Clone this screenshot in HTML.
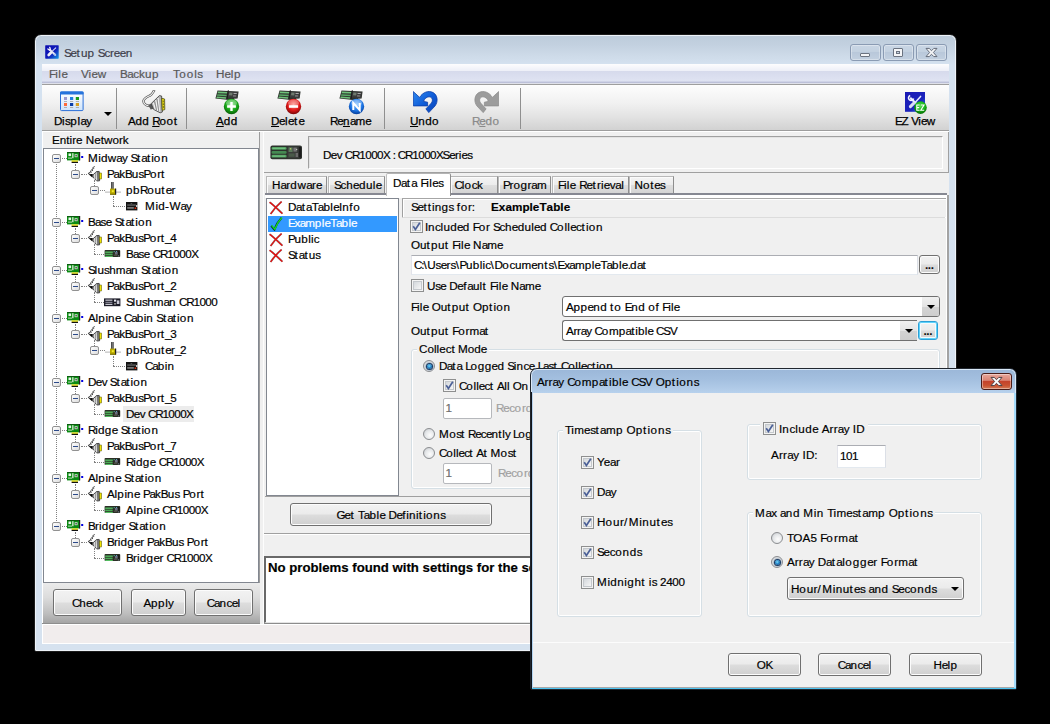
<!DOCTYPE html>
<html>
<head>
<meta charset="utf-8">
<title>Setup Screen</title>
<style>
*{box-sizing:border-box;margin:0;padding:0}
html,body{width:1050px;height:724px;overflow:hidden;background:#000}
body{position:relative;font-family:"Liberation Sans",sans-serif;font-size:12px;color:#000}
.a{position:absolute}
.t{position:absolute;white-space:nowrap;line-height:14px;font-size:11.7px;font-kerning:none;-webkit-text-stroke:.18px currentColor}
.u{text-decoration:underline}
#win{left:34px;top:34px;width:923px;height:618px;border-radius:7px 7px 2px 2px;background:linear-gradient(#bccbda 0px,#c3d1e0 10px,#cddae8 20px,#d5e2f0 30px,#d6e2ef 100%);border:1px solid #1c1c1c;box-shadow:inset 0 0 0 1px #eef3f9}
#client{left:42px;top:64px;width:907px;height:580px;background:#f0f0f0}
.capb{position:absolute;top:44px;width:31px;height:17px;border:1px solid #8a9bb3;border-radius:3px;background:linear-gradient(#c9d6e5,#c3d1e0 45%,#b9c8da 50%,#c2d0e0);box-shadow:inset 0 0 0 1px rgba(255,255,255,.35)}
#menubar{left:42px;top:64px;width:907px;height:19px;background:linear-gradient(#fdfdfe 0,#eef0f8 6.5px,#d6daec 7px,#dfe3f2 17px,#c0c4dc 18px,#b9bdd6 19px)}
#menubar .t{top:3px;color:#585858}
#tbar{left:42px;top:85px;width:907px;height:45px;background:linear-gradient(#fdfdfd 0,#f1f1f1 40%,#e3e3e3 70%,#d2d2d2 100%)}
.sep{position:absolute;top:88px;width:1px;height:41px;background:#8f8f8f}
.tbt{position:absolute;top:114px;white-space:nowrap;font-size:11.7px;line-height:14px;-webkit-text-stroke:.25px #000;font-kerning:none}
/* widgets */
.btn{position:absolute;border:1px solid #707070;border-radius:3px;background:linear-gradient(#f2f2f2 0,#ebebeb 48%,#dddddd 52%,#cfcfcf 100%);box-shadow:inset 0 0 0 1px #fcfcfc;text-align:center;font-size:11.7px;white-space:nowrap;font-kerning:none;-webkit-text-stroke:.18px currentColor}
.chk{position:absolute;width:13px;height:13px;border:1px solid #8e8f8f;background:#f4f4f4;box-shadow:inset 0 0 0 1px #f4f4f4,inset 0 0 0 2px #c4c8cc;}
.chk i{position:absolute;left:2px;top:2px;width:7px;height:7px;background:linear-gradient(135deg,#d4d8dc,#f6f6f6)}
.rad{position:absolute;width:12px;height:12px;border:1px solid #8b8d90;border-radius:50%;background:radial-gradient(circle at 60% 62%,#fdfdfd 0,#e6e8ea 50%,#bfc3c8 100%)}
.rad.on:after{content:"";position:absolute;left:2.5px;top:2.5px;width:5px;height:5px;border-radius:50%;background:radial-gradient(circle at 45% 40%,#7fdcfa 0,#1d7fc4 50%,#0c2c5c 100%);box-shadow:0 0 0 1px #1b3c63,0 0 0 1.8px rgba(120,140,165,.55)}
.grp{position:absolute;border:1px solid #d5dfe5;border-radius:3px;box-shadow:inset 0 0 0 1px #fff}
.leg{position:absolute;background:#f0f0f0;white-space:nowrap;font-size:11.7px;line-height:14px;padding:0 2px;font-kerning:none;-webkit-text-stroke:.18px currentColor}
.edit{position:absolute;background:#fff;border:1px solid #e3e9ef;border-top-color:#abadb3;border-left-color:#e2e3ea;border-right-color:#dbdfe6;font-size:11.7px;white-space:nowrap;overflow:hidden}
.combo{position:absolute;background:#fff;border:1px solid #707070;border-radius:3px;font-size:11.7px;white-space:nowrap;overflow:hidden}
.cbb{position:absolute;right:0;top:0;bottom:0;width:17px;background:linear-gradient(#f0f0f0,#e4e4e4 50%,#d4d4d4 51%,#cdcdcd)}
.cbb:after{content:"";position:absolute;left:5px;top:50%;margin-top:-2px;border-left:4px solid transparent;border-right:4px solid transparent;border-top:4px solid #000}
.dl{position:absolute;border-style:dotted;border-color:#808080;border-width:0}
.exp{position:absolute;width:9px;height:9px;border:1px solid #919191;border-radius:2px;background:linear-gradient(135deg,#fff,#dcdcdc)}
.exp:after{content:"";position:absolute;left:1px;top:3px;width:5px;height:1px;background:#2c4a8a}
.k1{letter-spacing:.1px}.k10{letter-spacing:1.0px}.k11{letter-spacing:1.1px}.k12{letter-spacing:1.2px}.k13{letter-spacing:1.3px}.k14{letter-spacing:1.4px}.k15{letter-spacing:1.5px}.k2{letter-spacing:.2px}.k3{letter-spacing:.3px}.k4{letter-spacing:.4px}.k5{letter-spacing:.5px}.k6{letter-spacing:.6px}.k7{letter-spacing:.7px}.k8{letter-spacing:.8px}.k9{letter-spacing:.9px}.kn1{letter-spacing:-.1px}.kn10{letter-spacing:-1.0px}.kn11{letter-spacing:-1.1px}.kn12{letter-spacing:-1.2px}.kn2{letter-spacing:-.2px}.kn3{letter-spacing:-.3px}.kn4{letter-spacing:-.4px}.kn5{letter-spacing:-.5px}.kn6{letter-spacing:-.6px}.kn7{letter-spacing:-.7px}.kn8{letter-spacing:-.8px}.kn9{letter-spacing:-.9px}</style>
</head>
<body>
<div id="win" class="a"></div>
<div id="client" class="a"></div>
<svg class="a" style="left:45px;top:45px" width="14" height="14" viewBox="0 0 14 14">
 <defs><linearGradient id="ig" x1="0" y1="0" x2="1" y2="1"><stop offset="0" stop-color="#0c0cae"/><stop offset=".55" stop-color="#0f1cba"/><stop offset="1" stop-color="#149ae6"/></linearGradient></defs>
 <rect x=".2" y=".2" width="13.5" height="13.5" rx=".6" fill="url(#ig)"/>
 <path d="M4.8 4.8 L10.2 9.8" stroke="#e4e6f6" stroke-width="1.9" stroke-linecap="round"/>
 <path d="M2.9 3.9 L4.6 5.2 M4.7 2.3 L5.4 4.4" stroke="#f2f3fb" stroke-width="1.3" stroke-linecap="round"/>
 <path d="M10.7 2.8 L7.6 5.9" stroke="#cdd2f2" stroke-width="1.1" stroke-linecap="round"/>
 <path d="M5.9 7.8 L3.7 10" stroke="#eeeef6" stroke-width="2.7" stroke-linecap="round"/>
 <path d="M9.4 9.4 L10.4 10.2" stroke="#a8c4ee" stroke-width="1.6" stroke-linecap="round"/>
</svg>
<div class="t" style="left:64px;top:46px;color:#3d3d4a"><span class="kn12">S</span><span class="kn6">e</span><span class="k11">t</span><span class="k2">u</span><span class="k6">p</span><span class="kn1"> </span><span class="kn12">S</span><span class="kn4">c</span>r<span class="kn6">ee</span><span class="k5">n</span></div>
<div class="capb" style="left:850px"><div class="a" style="left:9px;top:8px;width:10px;height:4px;border:1px solid #6b7380;border-radius:1px;background:#f4f5f7"></div></div>
<div class="capb" style="left:883px"><div class="a" style="left:9px;top:3px;width:10px;height:9px;border:1px solid #6b7380;border-radius:1px;background:#f4f5f7"><div class="a" style="left:2px;top:2px;width:4px;height:3px;border:1px solid #6b7380;background:#c6d3e2"></div></div></div>
<div class="capb" style="left:916px"><svg class="a" style="left:8px;top:2px" width="13" height="11" viewBox="0 0 13 11"><path d="M1 1.4 L4.2 1.4 L6.5 3.7 L8.8 1.4 L12 1.4 L8.4 5.5 L12 9.6 L8.8 9.6 L6.5 7.3 L4.2 9.6 L1 9.6 L4.6 5.5 Z" fill="#f4f5f7" stroke="#646c7a" stroke-width="1" stroke-linejoin="round"/></svg></div>
<div id="menubar" class="a">
 <div class="t" style="left:7px"><span class="kn10">F</span><span class="k5">i</span><span class="k6">l</span><span class="kn3">e</span></div>
 <div class="t" style="left:39px"><span class="kn3">V</span><span class="k5">i</span><span class="kn3">e</span><span class="k4">w</span></div>
 <div class="t" style="left:78px"><span class="kn5">B</span><span class="kn6">a</span><span class="kn1">c</span><span class="k1">k</span><span class="k5">u</span><span class="k9">p</span></div>
 <div class="t" style="left:131px"><span class="kn10">T</span><span class="k10">oo</span><span class="k5">l</span><span class="kn5">s</span></div>
 <div class="t" style="left:174px"><span class="k1">H</span><span class="kn3">e</span><span class="k6">l</span><span class="k9">p</span></div>
</div>
<div class="a" style="left:42px;top:83px;width:907px;height:1px;background:#dfe1ea"></div>
<div class="a" style="left:42px;top:84px;width:907px;height:1px;background:#9e9e9e"></div>
<div id="tbar" class="a"></div>
<div class="a" style="left:42px;top:130px;width:907px;height:1px;background:#9d9d9d"></div>
<div class="sep" style="left:116px"></div>
<div class="sep" style="left:186px"></div>
<div class="sep" style="left:384px"></div>
<div class="sep" style="left:520px"></div>
<div class="tbt" style="left:54px"><span class="kn4">D</span><span class="k3">i</span><span class="kn6">s</span><span class="k7">p</span><span class="k4">l</span><span class="kn7">a</span><span class="kn2">y</span></div>
<div class="a" style="left:104px;top:112px;width:0;height:0;border-left:4px solid transparent;border-right:4px solid transparent;border-top:4px solid #000"></div>
<div class="tbt" style="left:128px"><span class="kn3">A</span><span class="k3">dd</span><span class="kn2"> </span><span class="u"><span class="kn12">R</span></span><span class="k7">oo</span><span class="k10">t</span></div>
<div class="tbt" style="left:216px"><span class="u"><span class="kn1">A</span></span><span class="k5">dd</span></div>
<div class="tbt" style="left:271px"><span class="u"><span class="kn4">D</span></span><span class="kn5">e</span><span class="k4">l</span><span class="kn5">e</span><span class="k12">t</span><span class="kn5">e</span></div>
<div class="tbt" style="left:330px"><span class="kn12">R</span><span class="kn8">e</span><span class="u"><span class="k5">n</span></span><span class="kn9">a</span>m<span class="kn6">e</span></div>
<div class="tbt" style="left:410px"><span class="u"><span class="kn3">U</span></span><span class="k5">n</span><span class="k3">d</span><span class="k8">o</span></div>
<div class="tbt" style="left:472px;color:#8a8a8a;-webkit-text-stroke:.25px #8a8a8a"><span class="kn11">R</span><span class="u"><span class="kn4">e</span></span><span class="k5">d</span><span class="k10">o</span></div>
<div class="tbt" style="left:895px"><span class="kn12">E</span><span class="kn6">Z</span><span class="kn2"> </span><span class="kn7">V</span><span class="k1">i</span><span class="kn7">e</span>w</div>

<div class="a" style="left:42px;top:131px;width:907px;height:1px;background:#fff"></div>
<div class="t" style="left:52px;top:133px">Entire Network</div>
<div class="a" style="left:43px;top:148px;width:216px;height:435px;background:#fff;border:1px solid #828790"></div>
<div class="dl" style="left:56px;top:164px;width:0;height:357px;border-left-width:1px"></div>
<div class="exp" style="left:52px;top:154px"></div>
<div class="dl" style="left:62px;top:158px;width:5px;height:0;border-top-width:1px"></div>
<svg class="a" style="left:67px;top:152px" width="17" height="12" viewBox="0 0 17 12"><rect x="0" y="0" width="13" height="8.4" fill="#0a8a12"/><rect x="0" y="0" width="13" height="1" fill="#0c5a10"/><rect x="12" y="0" width="1.2" height="8.4" fill="#222"/><rect x="1.5" y="1.5" width="2.6" height="2.6" fill="#e8f4e8"/><rect x="5.2" y="1.2" width="1.3" height="5" fill="#dfeedd"/><rect x="7.6" y="2.2" width="3" height="3" fill="#cfe2cf"/><rect x="8.4" y="3" width="1.4" height="1.4" fill="#444"/><rect x="1" y="5.6" width="4" height="1" fill="#bfe0bf"/><rect x="4.6" y="8.4" width="6.4" height="1.4" fill="#e8e000"/><rect x="4.6" y="9.8" width="6.4" height="1.2" fill="#111"/><rect x="14.2" y="4" width="2" height="2" fill="#0000e0"/></svg>
<div class="t" style="left:88px;top:151px"><span class="k6">M</span><span class="k1">i</span><span class="k3">d</span>w<span class="kn9">a</span><span class="kn4">y</span><span class="kn2"> </span><span class="kn12">S</span><span class="k10">t</span><span class="kn9">a</span><span class="k10">t</span><span class="k1">i</span><span class="k8">o</span><span class="k5">n</span></div>
<div class="exp" style="left:71px;top:170px"></div>
<div class="dl" style="left:75px;top:164px;width:0;height:6px;border-left-width:1px"></div>
<div class="dl" style="left:81px;top:174px;width:6px;height:0;border-top-width:1px"></div>
<svg class="a" style="left:86px;top:166px" width="17" height="16" viewBox="0 0 17 16"><path d="M8.6 0.6 L6.8 1.6 L7.8 2.6 L5.6 3.4 L6.6 4.6 L4.2 5.2 L5.2 6.4 L2.2 7.2 L3.4 8.6" stroke="#111" stroke-width="1" fill="none" stroke-dasharray="1.5 .6"/><path d="M2.6 8.2 L6.8 8 L6.4 11.6 Z" fill="#000"/><path d="M5.8 10 L10.4 5.6 L13.2 5.4 L13.6 14.8 L10.8 15 Z" fill="#8e8e8e" stroke="#2a2a2a" stroke-width=".8"/><path d="M8.4 8 L8.8 13 M10.2 6.4 L10.6 14.4" stroke="#e0e0e0" stroke-width="1"/><path d="M11.8 6 L12.2 14.6" stroke="#5a5a5a" stroke-width=".8"/><rect x="13.4" y="7" width="2.2" height="6" fill="#f0e400" stroke="#4a4a10" stroke-width=".5"/></svg>
<div class="t" style="left:107px;top:167px"><span class="kn12">P</span><span class="kn9">a</span><span class="kn2">k</span><span class="kn9">B</span><span class="k1">u</span><span class="kn8">s</span><span class="kn12">P</span><span class="k7">o</span><span class="kn1">r</span><span class="k10">t</span></div>
<div class="exp" style="left:90px;top:186px"></div>
<div class="dl" style="left:94px;top:180px;width:0;height:6px;border-left-width:1px"></div>
<div class="dl" style="left:100px;top:190px;width:5px;height:0;border-top-width:1px"></div>
<svg class="a" style="left:105px;top:182px" width="17" height="13" viewBox="0 0 17 13"><rect x="0" y="9.6" width="16" height="1" fill="#b4b4b4"/><rect x="6.2" y="0" width="2.4" height="7" fill="#222"/><rect x="7.1" y="0" width=".7" height="7" fill="#999"/><rect x="5" y="6.6" width="6" height="6" fill="#b8a800"/><rect x="10" y="6.6" width="1.2" height="6" fill="#222"/><rect x="6.8" y="8.2" width="2" height="2" fill="#f4ec30"/><rect x="5" y="11.8" width="6" height=".9" fill="#6a6000"/></svg>
<div class="t" style="left:126px;top:183px"><span class="k6">p</span><span class="k4">b</span><span class="kn12">R</span><span class="k8">o</span><span class="k2">u</span><span class="k11">t</span><span class="kn6">e</span>r</div>
<div class="dl" style="left:113px;top:196px;width:0;height:10px;border-left-width:1px"></div>
<div class="dl" style="left:113px;top:206px;width:12px;height:0;border-top-width:1px"></div>
<svg class="a" style="left:126px;top:202px" width="12" height="9" viewBox="0 0 12 9"><rect x="0" y="0" width="11.4" height="8.4" fill="#151515"/><rect x="1.2" y="2.6" width="8.6" height=".9" fill="#8a8a8a"/><rect x="1.2" y="5.4" width="6.6" height="1.1" fill="#b5b5b5"/><rect x="4.6" y="1" width="1.6" height="1.2" fill="#555"/><rect x="8.6" y="5.4" width="1.6" height="1.6" fill="#e03010"/><rect x="10" y="3.2" width="1.4" height="1.6" fill="#eee"/></svg>
<div class="t" style="left:145px;top:199px"><span class="k7">M</span><span class="k2">i</span><span class="k3">d</span><span class="k6">-</span><span class="kn2">W</span><span class="kn8">a</span><span class="kn3">y</span></div>
<div class="exp" style="left:52px;top:218px"></div>
<div class="dl" style="left:62px;top:222px;width:5px;height:0;border-top-width:1px"></div>
<svg class="a" style="left:67px;top:216px" width="17" height="12" viewBox="0 0 17 12"><rect x="0" y="0" width="13" height="8.4" fill="#0a8a12"/><rect x="0" y="0" width="13" height="1" fill="#0c5a10"/><rect x="12" y="0" width="1.2" height="8.4" fill="#222"/><rect x="1.5" y="1.5" width="2.6" height="2.6" fill="#e8f4e8"/><rect x="5.2" y="1.2" width="1.3" height="5" fill="#dfeedd"/><rect x="7.6" y="2.2" width="3" height="3" fill="#cfe2cf"/><rect x="8.4" y="3" width="1.4" height="1.4" fill="#444"/><rect x="1" y="5.6" width="4" height="1" fill="#bfe0bf"/><rect x="4.6" y="8.4" width="6.4" height="1.4" fill="#e8e000"/><rect x="4.6" y="9.8" width="6.4" height="1.2" fill="#111"/><rect x="14.2" y="4" width="2" height="2" fill="#0000e0"/></svg>
<div class="t" style="left:88px;top:215px"><span class="kn8">B</span><span class="kn9">a</span><span class="kn7">se</span><span class="kn2"> </span><span class="kn12">S</span><span class="k10">t</span><span class="kn9">a</span><span class="k10">t</span><span class="k1">i</span><span class="k8">o</span><span class="k4">n</span></div>
<div class="exp" style="left:71px;top:234px"></div>
<div class="dl" style="left:75px;top:228px;width:0;height:6px;border-left-width:1px"></div>
<div class="dl" style="left:81px;top:238px;width:6px;height:0;border-top-width:1px"></div>
<svg class="a" style="left:86px;top:230px" width="17" height="16" viewBox="0 0 17 16"><path d="M8.6 0.6 L6.8 1.6 L7.8 2.6 L5.6 3.4 L6.6 4.6 L4.2 5.2 L5.2 6.4 L2.2 7.2 L3.4 8.6" stroke="#111" stroke-width="1" fill="none" stroke-dasharray="1.5 .6"/><path d="M2.6 8.2 L6.8 8 L6.4 11.6 Z" fill="#000"/><path d="M5.8 10 L10.4 5.6 L13.2 5.4 L13.6 14.8 L10.8 15 Z" fill="#8e8e8e" stroke="#2a2a2a" stroke-width=".8"/><path d="M8.4 8 L8.8 13 M10.2 6.4 L10.6 14.4" stroke="#e0e0e0" stroke-width="1"/><path d="M11.8 6 L12.2 14.6" stroke="#5a5a5a" stroke-width=".8"/><rect x="13.4" y="7" width="2.2" height="6" fill="#f0e400" stroke="#4a4a10" stroke-width=".5"/></svg>
<div class="t" style="left:107px;top:231px"><span class="kn12">P</span><span class="kn10">a</span><span class="kn3">k</span><span class="kn9">B</span><span class="k1">u</span><span class="kn8">s</span><span class="kn12">P</span><span class="k7">o</span><span class="kn2">r</span><span class="k9">t</span><span class="kn12">_</span><span class="kn7">4</span></div>
<div class="dl" style="left:94px;top:244px;width:0;height:10px;border-left-width:1px"></div>
<div class="dl" style="left:94px;top:254px;width:10px;height:0;border-top-width:1px"></div>
<svg class="a" style="left:104px;top:250px" width="17" height="8" viewBox="0 0 17 8"><rect x="0.6" y="0" width="15.6" height="7" rx=".8" fill="#2b2f26"/><rect x="1.2" y="1.6" width="7.6" height="1.1" fill="#5fe070"/><rect x="1.2" y="3.7" width="7.4" height="1.1" fill="#52cc62"/><rect x="1.2" y="5.8" width="7.6" height="1" fill="#5fe070"/><rect x="9.6" y="1" width="1.2" height="1.2" fill="#4a9a8a"/><rect x="11" y="2" width="2.6" height="2.6" fill="#6a6e80"/><rect x="12" y="1" width="1" height="1" fill="#5aa0c8"/><rect x="10" y="4.6" width="3" height="1.2" fill="#55584a"/><rect x="14" y="1" width="1.6" height="5" fill="#1a1a1a"/><rect x="13.8" y="5.4" width="1.4" height="1" fill="#7a8a9a"/></svg>
<div class="t" style="left:126px;top:247px"><span class="kn8">B</span><span class="kn9">a</span><span class="kn7">s</span><span class="kn6">e</span><span class="kn2"> </span><span class="kn12">CR</span><span class="kn5">1000</span><span class="kn12">X</span></div>
<div class="exp" style="left:52px;top:266px"></div>
<div class="dl" style="left:62px;top:270px;width:5px;height:0;border-top-width:1px"></div>
<svg class="a" style="left:67px;top:264px" width="17" height="12" viewBox="0 0 17 12"><rect x="0" y="0" width="13" height="8.4" fill="#0a8a12"/><rect x="0" y="0" width="13" height="1" fill="#0c5a10"/><rect x="12" y="0" width="1.2" height="8.4" fill="#222"/><rect x="1.5" y="1.5" width="2.6" height="2.6" fill="#e8f4e8"/><rect x="5.2" y="1.2" width="1.3" height="5" fill="#dfeedd"/><rect x="7.6" y="2.2" width="3" height="3" fill="#cfe2cf"/><rect x="8.4" y="3" width="1.4" height="1.4" fill="#444"/><rect x="1" y="5.6" width="4" height="1" fill="#bfe0bf"/><rect x="4.6" y="8.4" width="6.4" height="1.4" fill="#e8e000"/><rect x="4.6" y="9.8" width="6.4" height="1.2" fill="#111"/><rect x="14.2" y="4" width="2" height="2" fill="#0000e0"/></svg>
<div class="t" style="left:88px;top:263px"><span class="kn12">S</span><span class="k2">l</span><span class="k1">u</span><span class="kn7">s</span><span class="k1">h</span><span class="kn1">m</span><span class="kn9">a</span><span class="k4">n</span><span class="kn2"> </span><span class="kn12">S</span><span class="k10">t</span><span class="kn9">a</span><span class="k10">t</span><span class="k1">i</span><span class="k7">o</span><span class="k4">n</span></div>
<div class="exp" style="left:71px;top:282px"></div>
<div class="dl" style="left:75px;top:276px;width:0;height:6px;border-left-width:1px"></div>
<div class="dl" style="left:81px;top:286px;width:6px;height:0;border-top-width:1px"></div>
<svg class="a" style="left:86px;top:278px" width="17" height="16" viewBox="0 0 17 16"><path d="M8.6 0.6 L6.8 1.6 L7.8 2.6 L5.6 3.4 L6.6 4.6 L4.2 5.2 L5.2 6.4 L2.2 7.2 L3.4 8.6" stroke="#111" stroke-width="1" fill="none" stroke-dasharray="1.5 .6"/><path d="M2.6 8.2 L6.8 8 L6.4 11.6 Z" fill="#000"/><path d="M5.8 10 L10.4 5.6 L13.2 5.4 L13.6 14.8 L10.8 15 Z" fill="#8e8e8e" stroke="#2a2a2a" stroke-width=".8"/><path d="M8.4 8 L8.8 13 M10.2 6.4 L10.6 14.4" stroke="#e0e0e0" stroke-width="1"/><path d="M11.8 6 L12.2 14.6" stroke="#5a5a5a" stroke-width=".8"/><rect x="13.4" y="7" width="2.2" height="6" fill="#f0e400" stroke="#4a4a10" stroke-width=".5"/></svg>
<div class="t" style="left:107px;top:279px"><span class="kn12">P</span><span class="kn10">a</span><span class="kn3">k</span><span class="kn9">B</span><span class="k1">u</span><span class="kn8">s</span><span class="kn12">P</span><span class="k7">o</span><span class="kn2">r</span><span class="k9">t</span><span class="kn12">_</span><span class="kn7">2</span></div>
<div class="dl" style="left:94px;top:292px;width:0;height:10px;border-left-width:1px"></div>
<div class="dl" style="left:94px;top:302px;width:10px;height:0;border-top-width:1px"></div>
<svg class="a" style="left:104px;top:298px" width="17" height="9" viewBox="0 0 17 9"><rect x="0" y="0.4" width="16.4" height="7.8" fill="#1c1c28"/><rect x="1.4" y="1.6" width="7" height="1.1" fill="#d8d8e0"/><rect x="1.4" y="3.8" width="7" height="1" fill="#9a9aa8"/><rect x="1.4" y="5.8" width="7" height="1.1" fill="#d8d8e0"/><rect x="10" y="1.6" width="2.2" height="2" fill="#e8e8f0"/><rect x="12.8" y="2.4" width="2.6" height="3.6" fill="#c8c8d4"/><rect x="10" y="5" width="2" height="1.6" fill="#888"/></svg>
<div class="t" style="left:126px;top:295px"><span class="kn12">S</span><span class="k2">l</span><span class="k1">u</span><span class="kn7">s</span><span class="k1">h</span><span class="kn1">m</span><span class="kn9">a</span><span class="k4">n</span><span class="kn2"> </span><span class="kn12">CR</span><span class="kn6">1000</span></div>
<div class="exp" style="left:52px;top:314px"></div>
<div class="dl" style="left:62px;top:318px;width:5px;height:0;border-top-width:1px"></div>
<svg class="a" style="left:67px;top:312px" width="17" height="12" viewBox="0 0 17 12"><rect x="0" y="0" width="13" height="8.4" fill="#0a8a12"/><rect x="0" y="0" width="13" height="1" fill="#0c5a10"/><rect x="12" y="0" width="1.2" height="8.4" fill="#222"/><rect x="1.5" y="1.5" width="2.6" height="2.6" fill="#e8f4e8"/><rect x="5.2" y="1.2" width="1.3" height="5" fill="#dfeedd"/><rect x="7.6" y="2.2" width="3" height="3" fill="#cfe2cf"/><rect x="8.4" y="3" width="1.4" height="1.4" fill="#444"/><rect x="1" y="5.6" width="4" height="1" fill="#bfe0bf"/><rect x="4.6" y="8.4" width="6.4" height="1.4" fill="#e8e000"/><rect x="4.6" y="9.8" width="6.4" height="1.2" fill="#111"/><rect x="14.2" y="4" width="2" height="2" fill="#0000e0"/></svg>
<div class="t" style="left:88px;top:311px"><span class="kn3">A</span><span class="k2">l</span><span class="k6">p</span><span class="k1">i</span><span class="k4">n</span><span class="kn7">e</span><span class="kn2"> </span><span class="kn12">C</span><span class="kn9">a</span><span class="k4">b</span><span class="k1">i</span><span class="k4">n</span><span class="kn2"> </span><span class="kn12">S</span><span class="k10">t</span><span class="kn9">a</span><span class="k10">t</span><span class="k1">i</span><span class="k8">o</span><span class="k4">n</span></div>
<div class="exp" style="left:71px;top:330px"></div>
<div class="dl" style="left:75px;top:324px;width:0;height:6px;border-left-width:1px"></div>
<div class="dl" style="left:81px;top:334px;width:6px;height:0;border-top-width:1px"></div>
<svg class="a" style="left:86px;top:326px" width="17" height="16" viewBox="0 0 17 16"><path d="M8.6 0.6 L6.8 1.6 L7.8 2.6 L5.6 3.4 L6.6 4.6 L4.2 5.2 L5.2 6.4 L2.2 7.2 L3.4 8.6" stroke="#111" stroke-width="1" fill="none" stroke-dasharray="1.5 .6"/><path d="M2.6 8.2 L6.8 8 L6.4 11.6 Z" fill="#000"/><path d="M5.8 10 L10.4 5.6 L13.2 5.4 L13.6 14.8 L10.8 15 Z" fill="#8e8e8e" stroke="#2a2a2a" stroke-width=".8"/><path d="M8.4 8 L8.8 13 M10.2 6.4 L10.6 14.4" stroke="#e0e0e0" stroke-width="1"/><path d="M11.8 6 L12.2 14.6" stroke="#5a5a5a" stroke-width=".8"/><rect x="13.4" y="7" width="2.2" height="6" fill="#f0e400" stroke="#4a4a10" stroke-width=".5"/></svg>
<div class="t" style="left:107px;top:327px"><span class="kn12">P</span><span class="kn10">a</span><span class="kn3">k</span><span class="kn9">B</span><span class="k1">u</span><span class="kn8">s</span><span class="kn12">P</span><span class="k7">o</span><span class="kn2">r</span><span class="k9">t</span><span class="kn12">_</span><span class="kn7">3</span></div>
<div class="exp" style="left:90px;top:346px"></div>
<div class="dl" style="left:94px;top:340px;width:0;height:6px;border-left-width:1px"></div>
<div class="dl" style="left:100px;top:350px;width:5px;height:0;border-top-width:1px"></div>
<svg class="a" style="left:105px;top:342px" width="17" height="13" viewBox="0 0 17 13"><rect x="0" y="9.6" width="16" height="1" fill="#b4b4b4"/><rect x="6.2" y="0" width="2.4" height="7" fill="#222"/><rect x="7.1" y="0" width=".7" height="7" fill="#999"/><rect x="5" y="6.6" width="6" height="6" fill="#b8a800"/><rect x="10" y="6.6" width="1.2" height="6" fill="#222"/><rect x="6.8" y="8.2" width="2" height="2" fill="#f4ec30"/><rect x="5" y="11.8" width="6" height=".9" fill="#6a6000"/></svg>
<div class="t" style="left:126px;top:343px"><span class="k5">p</span><span class="k3">b</span><span class="kn12">R</span><span class="k7">o</span><span class="k1">u</span><span class="k10">t</span><span class="kn7">e</span><span class="kn1">r</span><span class="kn12">_</span><span class="kn6">2</span></div>
<div class="dl" style="left:113px;top:356px;width:0;height:10px;border-left-width:1px"></div>
<div class="dl" style="left:113px;top:366px;width:12px;height:0;border-top-width:1px"></div>
<svg class="a" style="left:126px;top:362px" width="12" height="9" viewBox="0 0 12 9"><rect x="0" y="0" width="11.4" height="8.4" fill="#151515"/><rect x="1.2" y="2.6" width="8.6" height=".9" fill="#8a8a8a"/><rect x="1.2" y="5.4" width="6.6" height="1.1" fill="#b5b5b5"/><rect x="4.6" y="1" width="1.6" height="1.2" fill="#555"/><rect x="8.6" y="5.4" width="1.6" height="1.6" fill="#e03010"/><rect x="10" y="3.2" width="1.4" height="1.6" fill="#eee"/></svg>
<div class="t" style="left:145px;top:359px"><span class="kn12">C</span><span class="kn9">a</span><span class="k4">b</span><span class="k1">i</span><span class="k4">n</span></div>
<div class="exp" style="left:52px;top:378px"></div>
<div class="dl" style="left:62px;top:382px;width:5px;height:0;border-top-width:1px"></div>
<svg class="a" style="left:67px;top:376px" width="17" height="12" viewBox="0 0 17 12"><rect x="0" y="0" width="13" height="8.4" fill="#0a8a12"/><rect x="0" y="0" width="13" height="1" fill="#0c5a10"/><rect x="12" y="0" width="1.2" height="8.4" fill="#222"/><rect x="1.5" y="1.5" width="2.6" height="2.6" fill="#e8f4e8"/><rect x="5.2" y="1.2" width="1.3" height="5" fill="#dfeedd"/><rect x="7.6" y="2.2" width="3" height="3" fill="#cfe2cf"/><rect x="8.4" y="3" width="1.4" height="1.4" fill="#444"/><rect x="1" y="5.6" width="4" height="1" fill="#bfe0bf"/><rect x="4.6" y="8.4" width="6.4" height="1.4" fill="#e8e000"/><rect x="4.6" y="9.8" width="6.4" height="1.2" fill="#111"/><rect x="14.2" y="4" width="2" height="2" fill="#0000e0"/></svg>
<div class="t" style="left:88px;top:375px"><span class="kn6">D</span><span class="kn7">ev</span><span class="kn2"> </span><span class="kn12">S</span><span class="k10">t</span><span class="kn9">a</span><span class="k10">t</span><span class="k1">i</span><span class="k8">o</span><span class="k4">n</span></div>
<div class="exp" style="left:71px;top:394px"></div>
<div class="dl" style="left:75px;top:388px;width:0;height:6px;border-left-width:1px"></div>
<div class="dl" style="left:81px;top:398px;width:6px;height:0;border-top-width:1px"></div>
<svg class="a" style="left:86px;top:390px" width="17" height="16" viewBox="0 0 17 16"><path d="M8.6 0.6 L6.8 1.6 L7.8 2.6 L5.6 3.4 L6.6 4.6 L4.2 5.2 L5.2 6.4 L2.2 7.2 L3.4 8.6" stroke="#111" stroke-width="1" fill="none" stroke-dasharray="1.5 .6"/><path d="M2.6 8.2 L6.8 8 L6.4 11.6 Z" fill="#000"/><path d="M5.8 10 L10.4 5.6 L13.2 5.4 L13.6 14.8 L10.8 15 Z" fill="#8e8e8e" stroke="#2a2a2a" stroke-width=".8"/><path d="M8.4 8 L8.8 13 M10.2 6.4 L10.6 14.4" stroke="#e0e0e0" stroke-width="1"/><path d="M11.8 6 L12.2 14.6" stroke="#5a5a5a" stroke-width=".8"/><rect x="13.4" y="7" width="2.2" height="6" fill="#f0e400" stroke="#4a4a10" stroke-width=".5"/></svg>
<div class="t" style="left:107px;top:391px"><span class="kn12">P</span><span class="kn10">a</span><span class="kn3">k</span><span class="kn9">B</span><span class="k1">u</span><span class="kn8">s</span><span class="kn12">P</span><span class="k7">o</span><span class="kn2">r</span><span class="k9">t</span><span class="kn12">_</span><span class="kn7">5</span></div>
<div class="dl" style="left:94px;top:404px;width:0;height:10px;border-left-width:1px"></div>
<div class="dl" style="left:94px;top:414px;width:10px;height:0;border-top-width:1px"></div>
<svg class="a" style="left:104px;top:410px" width="17" height="8" viewBox="0 0 17 8"><rect x="0.6" y="0" width="15.6" height="7" rx=".8" fill="#2b2f26"/><rect x="1.2" y="1.6" width="7.6" height="1.1" fill="#5fe070"/><rect x="1.2" y="3.7" width="7.4" height="1.1" fill="#52cc62"/><rect x="1.2" y="5.8" width="7.6" height="1" fill="#5fe070"/><rect x="9.6" y="1" width="1.2" height="1.2" fill="#4a9a8a"/><rect x="11" y="2" width="2.6" height="2.6" fill="#6a6e80"/><rect x="12" y="1" width="1" height="1" fill="#5aa0c8"/><rect x="10" y="4.6" width="3" height="1.2" fill="#55584a"/><rect x="14" y="1" width="1.6" height="5" fill="#1a1a1a"/><rect x="13.8" y="5.4" width="1.4" height="1" fill="#7a8a9a"/></svg>
<div class="a" style="left:123px;top:406px;width:71px;height:16px;background:#ececec"></div>
<div class="t" style="left:126px;top:407px"><span class="kn6">D</span><span class="kn7">e</span><span class="kn6">v</span><span class="kn2"> </span><span class="kn12">CR</span><span class="kn6">1000</span><span class="kn12">X</span></div>
<div class="exp" style="left:52px;top:426px"></div>
<div class="dl" style="left:62px;top:430px;width:5px;height:0;border-top-width:1px"></div>
<svg class="a" style="left:67px;top:424px" width="17" height="12" viewBox="0 0 17 12"><rect x="0" y="0" width="13" height="8.4" fill="#0a8a12"/><rect x="0" y="0" width="13" height="1" fill="#0c5a10"/><rect x="12" y="0" width="1.2" height="8.4" fill="#222"/><rect x="1.5" y="1.5" width="2.6" height="2.6" fill="#e8f4e8"/><rect x="5.2" y="1.2" width="1.3" height="5" fill="#dfeedd"/><rect x="7.6" y="2.2" width="3" height="3" fill="#cfe2cf"/><rect x="8.4" y="3" width="1.4" height="1.4" fill="#444"/><rect x="1" y="5.6" width="4" height="1" fill="#bfe0bf"/><rect x="4.6" y="8.4" width="6.4" height="1.4" fill="#e8e000"/><rect x="4.6" y="9.8" width="6.4" height="1.2" fill="#111"/><rect x="14.2" y="4" width="2" height="2" fill="#0000e0"/></svg>
<div class="t" style="left:88px;top:423px"><span class="kn12">R</span><span class="k1">i</span><span class="k3">d</span><span class="k5">g</span><span class="kn7">e</span><span class="kn2"> </span><span class="kn12">S</span><span class="k10">t</span><span class="kn9">a</span><span class="k10">t</span><span class="k1">i</span><span class="k8">o</span><span class="k4">n</span></div>
<div class="exp" style="left:71px;top:442px"></div>
<div class="dl" style="left:75px;top:436px;width:0;height:6px;border-left-width:1px"></div>
<div class="dl" style="left:81px;top:446px;width:6px;height:0;border-top-width:1px"></div>
<svg class="a" style="left:86px;top:438px" width="17" height="16" viewBox="0 0 17 16"><path d="M8.6 0.6 L6.8 1.6 L7.8 2.6 L5.6 3.4 L6.6 4.6 L4.2 5.2 L5.2 6.4 L2.2 7.2 L3.4 8.6" stroke="#111" stroke-width="1" fill="none" stroke-dasharray="1.5 .6"/><path d="M2.6 8.2 L6.8 8 L6.4 11.6 Z" fill="#000"/><path d="M5.8 10 L10.4 5.6 L13.2 5.4 L13.6 14.8 L10.8 15 Z" fill="#8e8e8e" stroke="#2a2a2a" stroke-width=".8"/><path d="M8.4 8 L8.8 13 M10.2 6.4 L10.6 14.4" stroke="#e0e0e0" stroke-width="1"/><path d="M11.8 6 L12.2 14.6" stroke="#5a5a5a" stroke-width=".8"/><rect x="13.4" y="7" width="2.2" height="6" fill="#f0e400" stroke="#4a4a10" stroke-width=".5"/></svg>
<div class="t" style="left:107px;top:439px"><span class="kn12">P</span><span class="kn10">a</span><span class="kn3">k</span><span class="kn9">B</span><span class="k1">u</span><span class="kn8">s</span><span class="kn12">P</span><span class="k7">o</span><span class="kn2">r</span><span class="k9">t</span><span class="kn12">_</span><span class="kn7">7</span></div>
<div class="dl" style="left:94px;top:452px;width:0;height:10px;border-left-width:1px"></div>
<div class="dl" style="left:94px;top:462px;width:10px;height:0;border-top-width:1px"></div>
<svg class="a" style="left:104px;top:458px" width="17" height="8" viewBox="0 0 17 8"><rect x="0.6" y="0" width="15.6" height="7" rx=".8" fill="#2b2f26"/><rect x="1.2" y="1.6" width="7.6" height="1.1" fill="#5fe070"/><rect x="1.2" y="3.7" width="7.4" height="1.1" fill="#52cc62"/><rect x="1.2" y="5.8" width="7.6" height="1" fill="#5fe070"/><rect x="9.6" y="1" width="1.2" height="1.2" fill="#4a9a8a"/><rect x="11" y="2" width="2.6" height="2.6" fill="#6a6e80"/><rect x="12" y="1" width="1" height="1" fill="#5aa0c8"/><rect x="10" y="4.6" width="3" height="1.2" fill="#55584a"/><rect x="14" y="1" width="1.6" height="5" fill="#1a1a1a"/><rect x="13.8" y="5.4" width="1.4" height="1" fill="#7a8a9a"/></svg>
<div class="t" style="left:126px;top:455px"><span class="kn12">R</span><span class="k1">i</span><span class="k3">d</span><span class="k5">g</span><span class="kn7">e</span><span class="kn2"> </span><span class="kn12">CR</span><span class="kn6">1000</span><span class="kn12">X</span></div>
<div class="exp" style="left:52px;top:474px"></div>
<div class="dl" style="left:62px;top:478px;width:5px;height:0;border-top-width:1px"></div>
<svg class="a" style="left:67px;top:472px" width="17" height="12" viewBox="0 0 17 12"><rect x="0" y="0" width="13" height="8.4" fill="#0a8a12"/><rect x="0" y="0" width="13" height="1" fill="#0c5a10"/><rect x="12" y="0" width="1.2" height="8.4" fill="#222"/><rect x="1.5" y="1.5" width="2.6" height="2.6" fill="#e8f4e8"/><rect x="5.2" y="1.2" width="1.3" height="5" fill="#dfeedd"/><rect x="7.6" y="2.2" width="3" height="3" fill="#cfe2cf"/><rect x="8.4" y="3" width="1.4" height="1.4" fill="#444"/><rect x="1" y="5.6" width="4" height="1" fill="#bfe0bf"/><rect x="4.6" y="8.4" width="6.4" height="1.4" fill="#e8e000"/><rect x="4.6" y="9.8" width="6.4" height="1.2" fill="#111"/><rect x="14.2" y="4" width="2" height="2" fill="#0000e0"/></svg>
<div class="t" style="left:88px;top:471px"><span class="kn3">A</span><span class="k2">l</span><span class="k6">p</span><span class="k1">i</span><span class="k5">n</span><span class="kn6">e</span><span class="kn2"> </span><span class="kn12">S</span><span class="k10">t</span><span class="kn9">a</span><span class="k10">t</span><span class="k1">i</span><span class="k8">o</span><span class="k5">n</span></div>
<div class="exp" style="left:71px;top:490px"></div>
<div class="dl" style="left:75px;top:484px;width:0;height:6px;border-left-width:1px"></div>
<div class="dl" style="left:81px;top:494px;width:6px;height:0;border-top-width:1px"></div>
<svg class="a" style="left:86px;top:486px" width="17" height="16" viewBox="0 0 17 16"><path d="M8.6 0.6 L6.8 1.6 L7.8 2.6 L5.6 3.4 L6.6 4.6 L4.2 5.2 L5.2 6.4 L2.2 7.2 L3.4 8.6" stroke="#111" stroke-width="1" fill="none" stroke-dasharray="1.5 .6"/><path d="M2.6 8.2 L6.8 8 L6.4 11.6 Z" fill="#000"/><path d="M5.8 10 L10.4 5.6 L13.2 5.4 L13.6 14.8 L10.8 15 Z" fill="#8e8e8e" stroke="#2a2a2a" stroke-width=".8"/><path d="M8.4 8 L8.8 13 M10.2 6.4 L10.6 14.4" stroke="#e0e0e0" stroke-width="1"/><path d="M11.8 6 L12.2 14.6" stroke="#5a5a5a" stroke-width=".8"/><rect x="13.4" y="7" width="2.2" height="6" fill="#f0e400" stroke="#4a4a10" stroke-width=".5"/></svg>
<div class="t" style="left:107px;top:487px"><span class="kn3">A</span><span class="k2">l</span><span class="k6">p</span><span class="k1">i</span><span class="k4">n</span><span class="kn7">e</span><span class="kn2"> </span><span class="kn12">P</span><span class="kn9">a</span><span class="kn2">k</span><span class="kn8">B</span><span class="k2">u</span><span class="kn7">s</span><span class="kn2"> </span><span class="kn12">P</span><span class="k8">o</span><span class="kn1">r</span><span class="k10">t</span></div>
<div class="dl" style="left:94px;top:500px;width:0;height:10px;border-left-width:1px"></div>
<div class="dl" style="left:94px;top:510px;width:10px;height:0;border-top-width:1px"></div>
<svg class="a" style="left:104px;top:506px" width="17" height="8" viewBox="0 0 17 8"><rect x="0.6" y="0" width="15.6" height="7" rx=".8" fill="#2b2f26"/><rect x="1.2" y="1.6" width="7.6" height="1.1" fill="#5fe070"/><rect x="1.2" y="3.7" width="7.4" height="1.1" fill="#52cc62"/><rect x="1.2" y="5.8" width="7.6" height="1" fill="#5fe070"/><rect x="9.6" y="1" width="1.2" height="1.2" fill="#4a9a8a"/><rect x="11" y="2" width="2.6" height="2.6" fill="#6a6e80"/><rect x="12" y="1" width="1" height="1" fill="#5aa0c8"/><rect x="10" y="4.6" width="3" height="1.2" fill="#55584a"/><rect x="14" y="1" width="1.6" height="5" fill="#1a1a1a"/><rect x="13.8" y="5.4" width="1.4" height="1" fill="#7a8a9a"/></svg>
<div class="t" style="left:126px;top:503px"><span class="kn3">A</span><span class="k3">l</span><span class="k6">p</span><span class="k2">i</span><span class="k5">n</span><span class="kn6">e</span><span class="kn2"> </span><span class="kn12">CR</span><span class="kn5">1000</span><span class="kn12">X</span></div>
<div class="exp" style="left:52px;top:522px"></div>
<div class="dl" style="left:62px;top:526px;width:5px;height:0;border-top-width:1px"></div>
<svg class="a" style="left:67px;top:520px" width="17" height="12" viewBox="0 0 17 12"><rect x="0" y="0" width="13" height="8.4" fill="#0a8a12"/><rect x="0" y="0" width="13" height="1" fill="#0c5a10"/><rect x="12" y="0" width="1.2" height="8.4" fill="#222"/><rect x="1.5" y="1.5" width="2.6" height="2.6" fill="#e8f4e8"/><rect x="5.2" y="1.2" width="1.3" height="5" fill="#dfeedd"/><rect x="7.6" y="2.2" width="3" height="3" fill="#cfe2cf"/><rect x="8.4" y="3" width="1.4" height="1.4" fill="#444"/><rect x="1" y="5.6" width="4" height="1" fill="#bfe0bf"/><rect x="4.6" y="8.4" width="6.4" height="1.4" fill="#e8e000"/><rect x="4.6" y="9.8" width="6.4" height="1.2" fill="#111"/><rect x="14.2" y="4" width="2" height="2" fill="#0000e0"/></svg>
<div class="t" style="left:88px;top:519px"><span class="kn8">B</span>r<span class="k2">i</span><span class="k3">d</span><span class="k5">g</span><span class="kn6">e</span>r<span class="kn2"> </span><span class="kn12">S</span><span class="k10">t</span><span class="kn9">a</span><span class="k10">t</span><span class="k2">i</span><span class="k8">o</span><span class="k5">n</span></div>
<div class="exp" style="left:71px;top:538px"></div>
<div class="dl" style="left:75px;top:532px;width:0;height:6px;border-left-width:1px"></div>
<div class="dl" style="left:81px;top:542px;width:6px;height:0;border-top-width:1px"></div>
<svg class="a" style="left:86px;top:534px" width="17" height="16" viewBox="0 0 17 16"><path d="M8.6 0.6 L6.8 1.6 L7.8 2.6 L5.6 3.4 L6.6 4.6 L4.2 5.2 L5.2 6.4 L2.2 7.2 L3.4 8.6" stroke="#111" stroke-width="1" fill="none" stroke-dasharray="1.5 .6"/><path d="M2.6 8.2 L6.8 8 L6.4 11.6 Z" fill="#000"/><path d="M5.8 10 L10.4 5.6 L13.2 5.4 L13.6 14.8 L10.8 15 Z" fill="#8e8e8e" stroke="#2a2a2a" stroke-width=".8"/><path d="M8.4 8 L8.8 13 M10.2 6.4 L10.6 14.4" stroke="#e0e0e0" stroke-width="1"/><path d="M11.8 6 L12.2 14.6" stroke="#5a5a5a" stroke-width=".8"/><rect x="13.4" y="7" width="2.2" height="6" fill="#f0e400" stroke="#4a4a10" stroke-width=".5"/></svg>
<div class="t" style="left:107px;top:535px"><span class="kn8">B</span><span class="kn1">r</span><span class="k1">i</span><span class="k3">d</span><span class="k5">g</span><span class="kn7">e</span><span class="kn1">r</span><span class="kn2"> </span><span class="kn12">P</span><span class="kn9">a</span><span class="kn2">k</span><span class="kn8">B</span><span class="k2">u</span><span class="kn7">s</span><span class="kn2"> </span><span class="kn12">P</span><span class="k8">o</span><span class="kn1">r</span><span class="k10">t</span></div>
<div class="dl" style="left:94px;top:548px;width:0;height:10px;border-left-width:1px"></div>
<div class="dl" style="left:94px;top:558px;width:10px;height:0;border-top-width:1px"></div>
<svg class="a" style="left:104px;top:554px" width="17" height="8" viewBox="0 0 17 8"><rect x="0.6" y="0" width="15.6" height="7" rx=".8" fill="#2b2f26"/><rect x="1.2" y="1.6" width="7.6" height="1.1" fill="#5fe070"/><rect x="1.2" y="3.7" width="7.4" height="1.1" fill="#52cc62"/><rect x="1.2" y="5.8" width="7.6" height="1" fill="#5fe070"/><rect x="9.6" y="1" width="1.2" height="1.2" fill="#4a9a8a"/><rect x="11" y="2" width="2.6" height="2.6" fill="#6a6e80"/><rect x="12" y="1" width="1" height="1" fill="#5aa0c8"/><rect x="10" y="4.6" width="3" height="1.2" fill="#55584a"/><rect x="14" y="1" width="1.6" height="5" fill="#1a1a1a"/><rect x="13.8" y="5.4" width="1.4" height="1" fill="#7a8a9a"/></svg>
<div class="t" style="left:126px;top:551px"><span class="kn8">B</span>r<span class="k2">i</span><span class="k3">d</span><span class="k5">g</span><span class="kn6">e</span>r<span class="kn2"> </span><span class="kn12">CR</span><span class="kn5">1000</span><span class="kn12">X</span></div>
<div class="a" style="left:43px;top:583px;width:217px;height:41px;background:linear-gradient(#ebebeb 0,#dcdcdc 35%,#bdbdbd 75%,#a2a2a2 100%)"></div>
<div class="btn" style="left:53px;top:589px;width:69px;height:27px;line-height:26px"><span class="kn12">C</span><span class="k2">h</span><span class="kn7">e</span><span class="kn5">c</span><span class="kn2">k</span></div>
<div class="btn" style="left:131px;top:589px;width:55px;height:27px;line-height:26px"><span class="kn3">A</span><span class="k6">pp</span><span class="k3">l</span><span class="kn3">y</span></div>
<div class="btn" style="left:194px;top:589px;width:59px;height:27px;line-height:26px"><span class="kn12">C</span><span class="kn9">a</span><span class="k4">n</span><span class="kn5">c</span><span class="kn7">e</span><span class="k2">l</span></div>
<div class="a" style="left:42px;top:624px;width:907px;height:20px;background:#f1eded;border:1px solid #fff"></div><div class="a" style="left:42px;top:132px;width:1px;height:491px;background:#fff"></div><div class="a" style="left:42px;top:623px;width:218px;height:1px;background:#8e8e8e"></div>
<svg class="a" style="left:60px;top:91px" width="24" height="21" viewBox="0 0 24 21"><defs><linearGradient id="dg" x1="0" y1="0" x2="0" y2="1"><stop offset="0" stop-color="#ffffff"/><stop offset="1" stop-color="#cfe4fb"/></linearGradient></defs><rect x="0.5" y="1" width="22.6" height="18.6" rx="1" fill="url(#dg)" stroke="#2a6fd8" stroke-width="1"/><rect x="0" y="0.6" width="23.6" height="3" rx="1" fill="#2573dc"/>
<rect x="4" y="6" width="3" height="3" fill="#9a98d0"/><rect x="10" y="6" width="3.2" height="3" fill="#1e80e0"/><rect x="15.8" y="6" width="3.2" height="3" fill="#1a9a1a"/>
<rect x="4" y="10" width="3" height=".8" fill="#a0a0a0"/><rect x="10" y="10" width="3.2" height=".8" fill="#a0a0a0"/><rect x="15.8" y="10" width="3.2" height=".8" fill="#a0a0a0"/>
<rect x="4" y="12" width="3" height="3" fill="#ff6a3a"/><rect x="10" y="12" width="3.2" height="3" fill="#0a3ea8"/><rect x="15.8" y="12" width="3.2" height="3" fill="#d8a020"/>
<rect x="4" y="16" width="3" height=".8" fill="#a0a0a0"/><rect x="10" y="16" width="3.2" height=".8" fill="#a0a0a0"/><rect x="15.8" y="16" width="3.2" height=".8" fill="#a0a0a0"/></svg>
<svg class="a" style="left:142px;top:90px" width="25" height="24" viewBox="0 0 25 24"><path d="M12 0.8 C10.6 2.6 10.4 4.2 8.2 5.4 C5 7 2.2 8 1.6 10.6 C1.2 13.2 3.6 15.4 6.6 15.8 L8.6 16" stroke="#4a4a4a" stroke-width="2.4" fill="none" stroke-linecap="round"/><path d="M12 0.8 C10.6 2.6 10.4 4.2 8.2 5.4 C5 7 2.2 8 1.6 10.6 C1.2 13.2 3.6 15.4 6.6 15.8 L8.6 16" stroke="#f4f4f4" stroke-width="1.1" fill="none" stroke-linecap="round"/><path d="M6.4 15 L9.4 13.4 L11.6 18.8 L8.6 19.4 Z" fill="#5a5a5a"/><path d="M9.2 13.6 L17.4 5.6 L19.6 6 L20.4 22 L18.2 22.8 L11.6 19.4 Z" fill="#b4b4b4" stroke="#3a3a3a" stroke-width=".8"/><path d="M11.4 12.6 L13.4 19.6 M13.8 10 L15.6 20.8 M16 8 L17.6 21.6" stroke="#f2f2f2" stroke-width="1.3" fill="none"/><path d="M12.6 11.4 L14.6 20.2 M15 9 L16.8 21.2" stroke="#7a7a7a" stroke-width=".7" fill="none"/><path d="M19.6 8.2 L22.6 9 L22.8 19.6 L20.2 20.4 Z" fill="#e8dc10" stroke="#4a4a20" stroke-width=".8"/><path d="M21.2 10.6 L21.4 18.4" stroke="#6a6410" stroke-width="1" stroke-dasharray="1.6 1.2"/></svg>
<svg class="a" style="left:215px;top:90px" width="25" height="12" viewBox="0 0 25 12"><path d="M2.5 0.6 L23.6 1.6 L22.6 8.6 L19 8.8 L18.6 10.6 L0.4 8.6 Z" fill="#2e332e"/><path d="M3 1.6 L12.4 2 L12 3.6 L2.6 3.2 Z" fill="#6fc27a"/><path d="M2.4 4.2 L11.8 4.7 L11.4 6.2 L2 5.7 Z" fill="#58a866"/><path d="M1.8 6.6 L11.2 7.2 L10.9 8.8 L1.4 8 Z" fill="#6fc27a"/><path d="M13.4 1.6 L22.8 2.2 L22 8 L12.6 7.6 Z" fill="#3c3c3c"/><path d="M14.4 2.6 L17.6 2.8 L17.2 5.4 L14 5.2 Z" fill="#6e7a6e"/><path d="M18.6 3 L21.8 3.2 L21.7 4 L18.5 3.8 Z" fill="#c8c8c8"/><path d="M18.2 5.2 L21.2 5.4 L21 6.6 L18 6.4 Z" fill="#8a8a8a"/><path d="M12.8 0.2 L13.8 0.2 L12.4 9.4 L11.6 9.4 Z" fill="#1a1a1a"/></svg>
<svg class="a" style="left:223px;top:98px" width="17" height="17" viewBox="-8.5 -8.5 17 17"><defs><radialGradient id="g231" cx="0" cy="-2" r="9" gradientUnits="userSpaceOnUse"><stop offset="0" stop-color="#7fe07f"/><stop offset=".65" stop-color="#18a818"/><stop offset="1" stop-color="#0a6a0a"/></radialGradient></defs><circle r="7.7" fill="url(#g231)"/><ellipse cx="0" cy="-3.6" rx="5.6" ry="3.4" fill="#fff" opacity=".28"/><path d="M-4.4 0 H4.4 M0 -4.4 V4.4" stroke="#fff" stroke-width="2.4"/></svg>
<svg class="a" style="left:277px;top:90px" width="25" height="12" viewBox="0 0 25 12"><path d="M2.5 0.6 L23.6 1.6 L22.6 8.6 L19 8.8 L18.6 10.6 L0.4 8.6 Z" fill="#2e332e"/><path d="M3 1.6 L12.4 2 L12 3.6 L2.6 3.2 Z" fill="#6fc27a"/><path d="M2.4 4.2 L11.8 4.7 L11.4 6.2 L2 5.7 Z" fill="#58a866"/><path d="M1.8 6.6 L11.2 7.2 L10.9 8.8 L1.4 8 Z" fill="#6fc27a"/><path d="M13.4 1.6 L22.8 2.2 L22 8 L12.6 7.6 Z" fill="#3c3c3c"/><path d="M14.4 2.6 L17.6 2.8 L17.2 5.4 L14 5.2 Z" fill="#6e7a6e"/><path d="M18.6 3 L21.8 3.2 L21.7 4 L18.5 3.8 Z" fill="#c8c8c8"/><path d="M18.2 5.2 L21.2 5.4 L21 6.6 L18 6.4 Z" fill="#8a8a8a"/><path d="M12.8 0.2 L13.8 0.2 L12.4 9.4 L11.6 9.4 Z" fill="#1a1a1a"/></svg>
<svg class="a" style="left:285px;top:98px" width="17" height="17" viewBox="-8.5 -8.5 17 17"><defs><radialGradient id="g293" cx="0" cy="-2" r="9" gradientUnits="userSpaceOnUse"><stop offset="0" stop-color="#ff8a80"/><stop offset=".65" stop-color="#e01818"/><stop offset="1" stop-color="#8a0a0a"/></radialGradient></defs><circle r="7.7" fill="url(#g293)"/><ellipse cx="0" cy="-3.6" rx="5.6" ry="3.4" fill="#fff" opacity=".28"/><path d="M-4.6 0 H4.6" stroke="#fff" stroke-width="2.6"/></svg>
<svg class="a" style="left:339px;top:90px" width="25" height="12" viewBox="0 0 25 12"><path d="M2.5 0.6 L23.6 1.6 L22.6 8.6 L19 8.8 L18.6 10.6 L0.4 8.6 Z" fill="#2e332e"/><path d="M3 1.6 L12.4 2 L12 3.6 L2.6 3.2 Z" fill="#6fc27a"/><path d="M2.4 4.2 L11.8 4.7 L11.4 6.2 L2 5.7 Z" fill="#58a866"/><path d="M1.8 6.6 L11.2 7.2 L10.9 8.8 L1.4 8 Z" fill="#6fc27a"/><path d="M13.4 1.6 L22.8 2.2 L22 8 L12.6 7.6 Z" fill="#3c3c3c"/><path d="M14.4 2.6 L17.6 2.8 L17.2 5.4 L14 5.2 Z" fill="#6e7a6e"/><path d="M18.6 3 L21.8 3.2 L21.7 4 L18.5 3.8 Z" fill="#c8c8c8"/><path d="M18.2 5.2 L21.2 5.4 L21 6.6 L18 6.4 Z" fill="#8a8a8a"/><path d="M12.8 0.2 L13.8 0.2 L12.4 9.4 L11.6 9.4 Z" fill="#1a1a1a"/></svg>
<svg class="a" style="left:347.5px;top:98px" width="17" height="17" viewBox="-8.5 -8.5 17 17"><defs><radialGradient id="g355" cx="0" cy="-2" r="9" gradientUnits="userSpaceOnUse"><stop offset="0" stop-color="#8ac4ff"/><stop offset=".65" stop-color="#1e78e8"/><stop offset="1" stop-color="#0a48a8"/></radialGradient></defs><circle r="7.7" fill="url(#g355)"/><ellipse cx="0" cy="-3.6" rx="5.6" ry="3.4" fill="#fff" opacity=".28"/><path d="M-3.2 3.6 V-3.6 L3.2 3.6 V-3.6" stroke="#fff" stroke-width="2" fill="none" stroke-linejoin="miter"/></svg>
<svg class="a" style="left:413px;top:91px" width="25" height="23" viewBox="0 0 25 23"><defs><linearGradient id="ug" x1="0" y1="0" x2="1" y2="1"><stop offset="0" stop-color="#2f8af0"/><stop offset=".5" stop-color="#0f5cd8"/><stop offset="1" stop-color="#0a44b8"/></linearGradient></defs><path d="M0.3 0.6 L0.3 14.9 L14.6 14.9 L14.6 11.2 L10.6 10.4 C11.4 8 13.4 5.8 16 5.8 C19.2 5.8 20.4 9.2 18.4 12 L12.9 17.9 L15.8 21.6 L22 15 C25.4 10.6 24.6 4.2 20.2 1.6 C15.6 -0.8 10 1 6.6 6.4 Z" fill="url(#ug)" stroke="#0a3ca8" stroke-width=".8" stroke-linejoin="round"/></svg>
<svg class="a" style="left:474px;top:91px" width="25" height="23" viewBox="0 0 25 23"><g transform="translate(25,0) scale(-1,1)"><path d="M0.3 0.6 L0.3 14.9 L14.6 14.9 L14.6 11.2 L10.6 10.4 C11.4 8 13.4 5.8 16 5.8 C19.2 5.8 20.4 9.2 18.4 12 L12.9 17.9 L15.8 21.6 L22 15 C25.4 10.6 24.6 4.2 20.2 1.6 C15.6 -0.8 10 1 6.6 6.4 Z" fill="#9c9c9c" stroke="#8e8e8e" stroke-width=".8" stroke-linejoin="round"/></g></svg>
<svg class="a" style="left:905px;top:92px" width="23" height="23" viewBox="0 0 23 23"><defs><linearGradient id="eg" x1="0" y1="0" x2="1" y2="1"><stop offset="0" stop-color="#1a1ab4"/><stop offset=".6" stop-color="#1a22bc"/><stop offset="1" stop-color="#2a7ad8"/></linearGradient><radialGradient id="ezb" cx="15.5" cy="14" r="7" gradientUnits="userSpaceOnUse"><stop offset="0" stop-color="#58e058"/><stop offset=".7" stop-color="#14b014"/><stop offset="1" stop-color="#0a7a0a"/></radialGradient></defs><rect width="20" height="19.8" fill="url(#eg)"/><path d="M6 6.4 L12.4 13" stroke="#e8ecff" stroke-width="2.2" stroke-linecap="round"/><path d="M5.2 3.4 A2.6 2.6 0 1 0 8.6 6.6" stroke="#f4f6ff" stroke-width="1.6" fill="none"/><path d="M15.6 4.4 L10.4 10.2" stroke="#e4e8ff" stroke-width="1.5" stroke-linecap="round"/><path d="M8.6 11.4 L5.4 14.6" stroke="#d8dcf4" stroke-width="3" stroke-linecap="round"/><circle cx="15.5" cy="15.6" r="6.3" fill="url(#ezb)"/><path d="M14.6 13 H11.8 V18.2 H14.6 M11.8 15.6 H14.2 M15.8 13 H19 L15.8 18.2 H19.2" stroke="#fff" stroke-width="1.1" fill="none"/></svg>
<div class="a" style="left:260px;top:132px;width:4px;height:492px;background:#f0f0f0"></div>
<div class="a" style="left:263px;top:132px;width:1px;height:492px;background:#fdfdfd"></div>
<svg class="a" style="left:270px;top:145px" width="33" height="15" viewBox="0 0 33 15"><rect x="0.4" y="0.6" width="31.6" height="13.6" rx="2" fill="#2c312c"/><rect x="1.6" y="2" width="15" height="2.8" rx="1.2" fill="#4f9a5c"/><rect x="1.6" y="5.9" width="15" height="2.8" rx="1.2" fill="#458a52"/><rect x="1.6" y="9.8" width="15" height="2.8" rx="1.2" fill="#4f9a5c"/><rect x="2.4" y="2.8" width="13" height="1" fill="#78c888"/><rect x="2.4" y="10.6" width="13" height="1" fill="#78c888"/><rect x="17.4" y="1.6" width="14" height="11.6" fill="#3a3d3a"/><rect x="18.6" y="2.4" width="4" height="4.6" fill="#5c7a5c"/><rect x="23.4" y="2.6" width="3.4" height="4" fill="#767676"/><rect x="18.6" y="8.4" width="6" height="3.4" fill="#4a5a4a"/><rect x="25.6" y="8" width="2.4" height="4" fill="#6a6a6a"/><rect x="28.8" y="2" width="2.4" height="10.6" fill="#1c1c1c"/><rect x="20" y="3.2" width="1.2" height="1.2" fill="#c8d860"/><rect x="26.2" y="4" width="1" height="1" fill="#d8d8d8"/></svg>
<div class="a" style="left:308px;top:136px;width:635px;height:33px;border:1px solid #a0a0a0;border-right-color:#fff;border-bottom-color:#fff;box-shadow:inset 1px 1px 0 #e3e3e3"></div>
<div class="t" style="left:323px;top:148px;"><span class="kn6">D</span><span class="kn7">ev</span><span class="kn2"> </span><span class="kn12">CR</span><span class="kn6">1000</span><span class="kn12">X</span><span class="kn2"> </span><span class="kn11">:</span><span class="kn2"> </span><span class="kn12">CR</span><span class="kn6">1000</span><span class="kn12">XS</span><span class="kn7">e</span><span class="kn1">r</span><span class="k1">i</span><span class="kn7">es</span></div>
<div class="a" style="left:264px;top:172px;width:685px;height:1px;background:#a0a0a0"></div>
<div class="a" style="left:259px;top:132px;width:1px;height:451px;background:#9c9c9c"></div>
<div class="a" style="left:266px;top:176px;width:61px;height:17px;border:1px solid #8e8e8e;border-top-color:#b8b8b8;border-left-color:#b8b8b8;border-bottom:none;background:linear-gradient(#f4f4f4,#ececec 50%,#dedede 51%,#d4d4d4);box-shadow:inset 1px 1px 0 #fbfbfb"></div>
<div class="t" style="left:272px;top:178px;">H<span class="kn7">a</span><span class="k2">r</span><span class="k5">d</span><span class="k3">w</span><span class="kn7">a</span><span class="k2">r</span><span class="kn4">e</span></div>
<div class="a" style="left:328px;top:176px;width:57px;height:17px;border:1px solid #8e8e8e;border-top-color:#b8b8b8;border-left-color:#b8b8b8;border-bottom:none;background:linear-gradient(#f4f4f4,#ececec 50%,#dedede 51%,#d4d4d4);box-shadow:inset 1px 1px 0 #fbfbfb"></div>
<div class="t" style="left:334px;top:178px;"><span class="kn12">S</span><span class="kn3">c</span><span class="k3">h</span><span class="kn5">e</span><span class="k4">d</span><span class="k3">u</span><span class="k4">l</span><span class="kn5">e</span></div>
<div class="a" style="left:450px;top:176px;width:48px;height:17px;border:1px solid #8e8e8e;border-top-color:#b8b8b8;border-left-color:#b8b8b8;border-bottom:none;background:linear-gradient(#f4f4f4,#ececec 50%,#dedede 51%,#d4d4d4);box-shadow:inset 1px 1px 0 #fbfbfb"></div>
<div class="t" style="left:454.5px;top:178px;"><span class="kn12">C</span><span class="k2">l</span><span class="k7">o</span><span class="kn5">c</span><span class="kn3">k</span></div>
<div class="a" style="left:498px;top:176px;width:53px;height:17px;border:1px solid #8e8e8e;border-top-color:#b8b8b8;border-left-color:#b8b8b8;border-bottom:none;background:linear-gradient(#f4f4f4,#ececec 50%,#dedede 51%,#d4d4d4);box-shadow:inset 1px 1px 0 #fbfbfb"></div>
<div class="t" style="left:503px;top:178px;"><span class="kn12">P</span><span class="kn1">r</span><span class="k7">o</span><span class="k4">g</span><span class="kn1">r</span><span class="kn9">a</span><span class="kn1">m</span></div>
<div class="a" style="left:552px;top:176px;width:77px;height:17px;border:1px solid #8e8e8e;border-top-color:#b8b8b8;border-left-color:#b8b8b8;border-bottom:none;background:linear-gradient(#f4f4f4,#ececec 50%,#dedede 51%,#d4d4d4);box-shadow:inset 1px 1px 0 #fbfbfb"></div>
<div class="t" style="left:558px;top:178px;"><span class="kn12">F</span><span class="k3">i</span><span class="k4">l</span><span class="kn5">e</span> <span class="kn11">R</span><span class="kn5">e</span><span class="k12">t</span><span class="k1">r</span><span class="k3">i</span><span class="kn5">e</span><span class="kn4">v</span><span class="kn7">a</span><span class="k4">l</span></div>
<div class="a" style="left:629px;top:176px;width:45px;height:17px;border:1px solid #8e8e8e;border-top-color:#b8b8b8;border-left-color:#b8b8b8;border-bottom:none;background:linear-gradient(#f4f4f4,#ececec 50%,#dedede 51%,#d4d4d4);box-shadow:inset 1px 1px 0 #fbfbfb"></div>
<div class="t" style="left:634.5px;top:178px;"><span class="k1">N</span><span class="k6">o</span><span class="k9">t</span><span class="kn8">e</span><span class="kn9">s</span></div>
<div class="a" style="left:265px;top:193px;width:682px;height:2px;background:#868892"></div>
<div class="a" style="left:265px;top:195px;width:682px;height:3px;background:#fff"></div>
<div class="a" style="left:386px;top:173px;width:65px;height:23px;border:1px solid #8e8e8e;border-top-color:#b4b4b4;border-left-color:#c0c0c0;border-bottom:none;background:#fff;border-radius:2px 2px 0 0"></div>
<div class="t" style="left:393px;top:176px;"><span class="kn4">D</span><span class="kn7">a</span><span class="k12">t</span><span class="kn7">a</span> <span class="kn12">F</span><span class="k3">i</span><span class="k4">l</span><span class="kn5">es</span></div>
<div class="a" style="left:947px;top:195px;width:2px;height:302px;background:#a3a3a3"></div>
<div class="a" style="left:946px;top:197px;width:1px;height:299px;background:#fff"></div>
<div class="a" style="left:265px;top:496px;width:683px;height:1px;background:#a0a0a0"></div>
<div class="a" style="left:948px;top:132px;width:1px;height:41px;background:#a0a0a0"></div>
<div class="a" style="left:266px;top:198px;width:133px;height:298px;background:#fff;border:1px solid #828790"></div>
<div class="a" style="left:268px;top:216px;width:129px;height:16px;background:#3399ff"></div>
<svg class="a" style="left:269px;top:201px" width="15" height="14" viewBox="0 0 15 14"><path d="M0.6 1.2 C4 3.4 9 8.6 13.4 12.6 M12.6 0.6 C9 3.6 4.6 8.6 1.6 13" stroke="#300000" stroke-width="1.9" fill="none" opacity=".55"/><path d="M0.6 1.2 C4 3.4 9 8.6 13.4 12.6 M12.6 0.6 C9 3.6 4.6 8.6 1.6 13" stroke="#ee0808" stroke-width="1.15" fill="none"/></svg>
<div class="t" style="left:288px;top:200px;"><span class="kn5">D</span><span class="kn8">a</span><span class="k11">t</span><span class="kn8">a</span><span class="kn12">T</span><span class="kn8">a</span><span class="k4">b</span><span class="k3">l</span><span class="kn6">e</span><span class="kn2">I</span><span class="k5">n</span><span class="k7">f</span><span class="k8">o</span></div>
<svg class="a" style="left:270px;top:217px" width="14" height="14" viewBox="0 0 14 14"><path d="M1.2 8.8 L4.4 12.6 C6 8 8.6 4 11.6 .8" stroke="#061800" stroke-width="2" fill="none" opacity=".8"/><path d="M1.6 8.4 L4.8 12.2 C6.4 7.6 9 3.6 12 .6" stroke="#12e022" stroke-width="1.4" fill="none"/></svg>
<div class="t" style="left:288px;top:216px;color:#fff"><span class="kn12">E</span><span class="kn8">x</span><span class="kn10">a</span><span class="kn1">m</span><span class="k4">p</span><span class="k1">l</span><span class="kn8">e</span><span class="kn12">T</span><span class="kn10">a</span><span class="k3">b</span><span class="k1">l</span><span class="kn8">e</span></div>
<svg class="a" style="left:269px;top:233px" width="15" height="14" viewBox="0 0 15 14"><path d="M0.6 1.2 C4 3.4 9 8.6 13.4 12.6 M12.6 0.6 C9 3.6 4.6 8.6 1.6 13" stroke="#300000" stroke-width="1.9" fill="none" opacity=".55"/><path d="M0.6 1.2 C4 3.4 9 8.6 13.4 12.6 M12.6 0.6 C9 3.6 4.6 8.6 1.6 13" stroke="#ee0808" stroke-width="1.15" fill="none"/></svg>
<div class="t" style="left:288px;top:232px;"><span class="kn12">P</span><span class="k1">u</span><span class="k4">b</span><span class="k2">l</span><span class="k1">i</span><span class="kn5">c</span></div>
<svg class="a" style="left:269px;top:249px" width="15" height="14" viewBox="0 0 15 14"><path d="M0.6 1.2 C4 3.4 9 8.6 13.4 12.6 M12.6 0.6 C9 3.6 4.6 8.6 1.6 13" stroke="#300000" stroke-width="1.9" fill="none" opacity=".55"/><path d="M0.6 1.2 C4 3.4 9 8.6 13.4 12.6 M12.6 0.6 C9 3.6 4.6 8.6 1.6 13" stroke="#ee0808" stroke-width="1.15" fill="none"/></svg>
<div class="t" style="left:288px;top:248px;"><span class="kn12">S</span><span class="k10">t</span><span class="kn9">a</span><span class="k10">t</span><span class="k1">u</span><span class="kn8">s</span></div>
<div class="a" style="left:402px;top:198px;width:544px;height:20px;border-left:1px solid #a0a0a0;border-top:1px solid #a6a6a6;border-bottom:1px solid #fff;box-shadow:inset 1px 1px 0 #fff"></div>
<div class="a" style="left:403px;top:217px;width:542px;height:1px;background:#dcdcdc"></div>
<div class="t" style="left:411px;top:200px;"><span class="kn12">S</span><span class="kn7">e</span><span class="k10">tt</span><span class="k1">i</span><span class="k4">n</span><span class="k5">g</span><span class="kn7">s</span><span class="kn2"> </span><span class="k6">f</span><span class="k8">o</span><span class="kn1">r</span><span class="kn10">:</span></div>
<div class="t" style="left:491px;top:200px;font-weight:bold;letter-spacing:.05px">ExampleTable</div>
<div class="chk" style="left:410px;top:220px"><i></i><svg class="a" style="left:1px;top:1px" width="9" height="9" viewBox="0 0 9 9"><path d="M1.2 4.2 L3.4 7.4 L7.8 .8" stroke="#4b6097" stroke-width="1.7" fill="none"/></svg></div>
<div class="t" style="left:425px;top:220px;"><span class="kn2">I</span><span class="k5">n</span><span class="kn4">c</span><span class="k3">l</span><span class="k2">u</span><span class="k3">d</span><span class="kn6">e</span><span class="k3">d</span><span class="kn2"> </span><span class="kn12">F</span><span class="k8">o</span>r<span class="kn2"> </span><span class="kn12">S</span><span class="kn4">c</span><span class="k2">h</span><span class="kn6">e</span><span class="k3">d</span><span class="k2">u</span><span class="k3">l</span><span class="kn6">e</span><span class="k3">d</span><span class="kn2"> </span><span class="kn12">C</span><span class="k8">o</span><span class="k3">ll</span><span class="kn6">e</span><span class="kn4">c</span><span class="k11">t</span><span class="k2">i</span><span class="k8">o</span><span class="k5">n</span></div>
<div class="t" style="left:411px;top:238px;"><span class="kn2">O</span><span class="k2">u</span><span class="k11">t</span><span class="k6">p</span><span class="k2">u</span><span class="k11">t</span><span class="kn1"> </span><span class="kn12">F</span><span class="k2">i</span><span class="k3">l</span><span class="kn6">e</span><span class="kn1"> </span><span class="k2">N</span><span class="kn9">a</span>m<span class="kn6">e</span></div>
<div class="edit" style="left:411px;top:255px;width:507px;height:20px"></div>
<div class="t" style="left:414px;top:258px;"><span class="kn12">C</span><span class="kn10">:</span><span class="k6">\</span><span class="kn3">U</span><span class="kn7">s</span><span class="kn6">e</span>r<span class="kn7">s</span><span class="k6">\</span><span class="kn12">P</span><span class="k2">u</span><span class="k4">b</span><span class="k2">l</span><span class="k1">i</span><span class="kn5">c</span><span class="k6">\</span><span class="kn6">D</span><span class="k8">o</span><span class="kn5">c</span><span class="k2">u</span>m<span class="kn6">e</span><span class="k5">n</span><span class="k10">t</span><span class="kn7">s</span><span class="k6">\</span><span class="kn12">E</span><span class="kn7">x</span><span class="kn9">a</span>m<span class="k6">p</span><span class="k2">l</span><span class="kn6">e</span><span class="kn12">T</span><span class="kn9">a</span><span class="k4">b</span><span class="k2">l</span><span class="kn6">e</span><span class="kn8">.</span><span class="k3">d</span><span class="kn9">a</span><span class="k10">t</span></div>
<div class="btn" style="left:919px;top:255px;width:21px;height:19px;line-height:19px;font-weight:bold;font-size:10px">...</div>
<div class="chk" style="left:411px;top:279px"><i></i></div>
<div class="t" style="left:427px;top:279px;"><span class="kn3">U</span><span class="kn7">s</span><span class="kn6">e</span><span class="kn1"> </span><span class="kn5">D</span><span class="kn6">e</span><span class="k7">f</span><span class="kn8">a</span><span class="k2">u</span><span class="k3">l</span><span class="k11">t</span><span class="kn1"> </span><span class="kn12">F</span><span class="k2">i</span><span class="k3">l</span><span class="kn6">e</span><span class="kn1"> </span><span class="k2">N</span><span class="kn8">a</span>m<span class="kn6">e</span></div>
<div class="t" style="left:411px;top:300px;"><span class="kn12">F</span><span class="k2">i</span><span class="k3">l</span><span class="kn6">e</span><span class="kn1"> </span><span class="kn2">O</span><span class="k2">u</span><span class="k11">t</span><span class="k6">p</span><span class="k2">u</span><span class="k11">t</span><span class="kn1"> </span><span class="kn2">O</span><span class="k6">p</span><span class="k11">t</span><span class="k2">i</span><span class="k8">o</span><span class="k5">n</span></div>
<div class="combo" style="left:562px;top:296px;width:378px;height:21px"><div class="cbb"></div></div>
<div class="t" style="left:566px;top:300px;"><span class="kn3">A</span><span class="k5">pp</span><span class="kn7">e</span><span class="k4">n</span><span class="k3">d</span><span class="kn2"> </span><span class="k10">t</span><span class="k8">o</span><span class="kn2"> </span><span class="kn12">E</span><span class="k4">n</span><span class="k3">d</span><span class="kn2"> </span><span class="k8">o</span><span class="k6">f</span><span class="kn2"> </span><span class="kn12">F</span><span class="k1">i</span><span class="k2">l</span><span class="kn7">e</span></div>
<div class="t" style="left:411px;top:324px;"><span class="kn2">O</span><span class="k2">u</span><span class="k11">t</span><span class="k6">p</span><span class="k2">u</span><span class="k11">t</span><span class="kn1"> </span><span class="kn12">F</span><span class="k8">o</span>rm<span class="kn9">a</span><span class="k11">t</span></div>
<div class="combo" style="left:562px;top:320px;width:355px;height:21px;border-radius:3px 0 0 3px;border-right:none"><div class="cbb"></div></div>
<div class="t" style="left:566px;top:324px;"><span class="kn4">A</span><span class="kn2">rr</span><span class="kn10">a</span><span class="kn5">y</span><span class="kn3"> </span><span class="kn12">C</span><span class="k7">o</span><span class="kn1">m</span><span class="k4">p</span><span class="kn10">a</span><span class="k9">t</span>i<span class="k3">b</span><span class="k1">l</span><span class="kn8">e</span><span class="kn3"> </span><span class="kn12">CS</span><span class="kn7">V</span></div>
<div class="btn" style="left:918px;top:321px;width:20px;height:19px;line-height:19px;font-weight:bold;font-size:10px;border-color:#2c9fd6;box-shadow:inset 0 0 0 1px #5fd3fb,inset 0 0 0 2px #f4fbfe">...</div>
<div class="grp" style="left:411px;top:349px;width:529px;height:140px"></div>
<div class="leg" style="left:417px;top:342px">Collect Mode</div>
<div class="rad on" style="left:423px;top:360px"></div>
<div class="t" style="left:439px;top:359px;"><span class="kn6">D</span><span class="kn10">a</span><span class="k10">t</span><span class="kn10">a</span><span class="kn2"> </span><span class="kn11">L</span><span class="k7">o</span><span class="k4">gg</span><span class="kn7">e</span><span class="k2">d</span><span class="kn2"> </span><span class="kn12">S</span><span class="k1">i</span><span class="k4">n</span><span class="kn5">c</span><span class="kn7">e</span><span class="kn2"> </span><span class="kn11">L</span><span class="kn10">a</span><span class="kn8">s</span><span class="k10">t</span><span class="kn2"> </span><span class="kn12">C</span><span class="k7">o</span><span class="k2">ll</span><span class="kn7">e</span><span class="kn5">c</span><span class="k10">t</span><span class="k1">i</span><span class="k7">o</span><span class="k4">n</span></div>
<div class="chk" style="left:443px;top:379px"><i></i><svg class="a" style="left:1px;top:1px" width="9" height="9" viewBox="0 0 9 9"><path d="M1.2 4.2 L3.4 7.4 L7.8 .8" stroke="#4b6097" stroke-width="1.7" fill="none"/></svg></div>
<div class="t" style="left:459px;top:379px;"><span class="kn12">C</span><span class="k7">o</span><span class="k1">ll</span><span class="kn8">e</span><span class="kn6">c</span><span class="k9">t</span><span class="kn3"> </span><span class="kn4">A</span><span class="k1">ll</span><span class="kn3"> O</span><span class="k3">n</span><span class="kn3"> </span><span class="kn12">F</span>i<span class="kn2">r</span><span class="kn8">s</span><span class="k9">t</span><span class="kn3"> </span><span class="kn12">C</span><span class="k7">o</span><span class="k1">ll</span><span class="kn8">e</span><span class="kn6">c</span><span class="k9">t</span>i<span class="k7">o</span><span class="k3">n</span></div>
<div class="edit" style="left:443px;top:398px;width:49px;height:21px;border:1px solid #b6b8bc;border-radius:2px"></div>
<div class="t" style="left:445.5px;top:401px;color:#6d6d6d"><span class="kn5">1</span></div>
<div class="t" style="left:496px;top:401px;color:#a0a0a0"><span class="kn12">R</span><span class="kn6">e</span><span class="kn4">c</span><span class="k8">o</span>r<span class="k3">d</span><span class="kn7">s</span></div>
<div class="rad" style="left:423px;top:428px"></div>
<div class="t" style="left:439px;top:427px;"><span class="k4">M</span><span class="k5">o</span><span class="kn10">s</span><span class="k8">t</span><span class="kn4"> </span><span class="kn12">R</span><span class="kn9">e</span><span class="kn7">c</span><span class="kn9">e</span><span class="k2">n</span><span class="k8">t</span>l<span class="kn6">y</span><span class="kn4"> </span><span class="kn12">L</span><span class="k5">o</span><span class="k2">gg</span><span class="kn9">e</span>d<span class="kn4"> </span><span class="kn12">R</span><span class="kn9">e</span><span class="kn7">c</span><span class="k5">o</span><span class="kn3">r</span>d<span class="kn10">s</span></div>
<div class="rad" style="left:423px;top:447px"></div>
<div class="t" style="left:439px;top:446px;"><span class="kn12">C</span><span class="k6">o</span>ll<span class="kn9">e</span><span class="kn7">c</span><span class="k8">t</span><span class="kn4"> </span><span class="kn5">A</span><span class="k8">t</span><span class="kn4"> </span><span class="k4">M</span><span class="k6">o</span><span class="kn9">s</span><span class="k8">t</span></div>
<div class="edit" style="left:443px;top:463px;width:49px;height:21px;border:1px solid #b6b8bc;border-radius:2px"></div>
<div class="t" style="left:445.5px;top:466px;color:#6d6d6d"><span class="kn5">1</span></div>
<div class="t" style="left:498px;top:466px;color:#a0a0a0"><span class="kn12">R</span><span class="kn6">e</span><span class="kn4">c</span><span class="k8">o</span>r<span class="k3">d</span><span class="kn7">s</span></div>
<div class="btn" style="left:290px;top:503px;width:202px;height:23px;line-height:21px"><span class="kn11">G</span><span class="kn6">e</span><span class="k11">t</span><span class="kn1"> </span><span class="kn12">T</span><span class="kn8">a</span><span class="k4">b</span><span class="k3">l</span><span class="kn6">e</span><span class="kn1"> </span><span class="kn5">D</span><span class="kn6">e</span><span class="k7">f</span><span class="k2">i</span><span class="k5">n</span><span class="k2">i</span><span class="k11">t</span><span class="k2">i</span><span class="k8">o</span><span class="k5">n</span><span class="kn7">s</span></div>
<div class="a" style="left:264px;top:533px;width:685px;height:1px;background:#a0a0a0"></div>
<div class="a" style="left:264px;top:534px;width:685px;height:1px;background:#fff"></div>
<div class="a" style="left:264px;top:556px;width:684px;height:67px;background:#fff;border:1px solid #e4e4e4;border-top:2px solid #696969;border-left:2px solid #696969"></div>
<div class="t" style="left:268px;top:560px;font-weight:bold;font-size:13.2px;line-height:16px;font-kerning:none">No problems found with settings for the selected device.</div>
<div class="a" style="left:264px;top:623px;width:685px;height:1px;background:#8c8c8c"></div>
<div class="a" style="left:530px;top:368px;width:487px;height:322px;border-radius:7px 7px 2px 2px;background:linear-gradient(#9bb7d8 0,#a3bfdf 10px,#b1cbe8 20px,#b9d3ee 25px,#b4d6f4 100%);border:1px solid #20262e;box-shadow:inset 0 0 0 1px #d9e8f8"></div>
<div class="a" style="left:533px;top:393px;width:481px;height:295px;background:#f0f0f0"></div><div class="a" style="left:1014px;top:393px;width:2px;height:295px;background:#a6dcfb"></div>
<div class="t" style="left:537px;top:375px"><span class="kn2">A</span><span class="k1">rr</span><span class="kn8">a</span><span class="kn2">y</span> <span class="kn12">C</span><span class="k9">o</span><span class="k1">m</span><span class="k7">p</span><span class="kn8">a</span><span class="k12">t</span><span class="k3">i</span><span class="k5">b</span><span class="k4">l</span><span class="kn5">e</span> <span class="kn12">CS</span><span class="kn5">V</span> <span class="kn1">O</span><span class="k7">p</span><span class="k12">t</span><span class="k3">i</span><span class="k9">o</span><span class="k6">n</span><span class="kn6">s</span></div>
<div class="a" style="left:981px;top:373px;width:31px;height:17px;border:1px solid #4a1c18;border-radius:3px;background:linear-gradient(#e8a89c 0,#da8474 42%,#c4432c 50%,#c8502f 75%,#d47c58 100%);box-shadow:inset 0 0 0 1px rgba(255,255,255,.4)"><svg class="a" style="left:8px;top:2px" width="13" height="11" viewBox="0 0 13 11"><path d="M1 1.4 L4.2 1.4 L6.5 3.7 L8.8 1.4 L12 1.4 L8.4 5.5 L12 9.6 L8.8 9.6 L6.5 7.3 L4.2 9.6 L1 9.6 L4.6 5.5 Z" fill="#fff" stroke="#4c4044" stroke-width="1" stroke-linejoin="round"/></svg></div>
<div class="grp" style="left:557px;top:430px;width:145px;height:187px"></div>
<div class="leg" style="left:563px;top:423px"><span class="kn10">T</span><span class="k4">i</span><span class="k2">m</span><span class="kn4">e</span><span class="kn5">s</span><span class="k13">t</span><span class="kn6">a</span><span class="k2">m</span><span class="k8">p</span><span class="k1"> </span>O<span class="k8">p</span><span class="k13">t</span><span class="k4">i</span><span class="k10">o</span><span class="k7">n</span><span class="kn5">s</span></div>
<div class="chk" style="left:581px;top:456px"><i></i><svg class="a" style="left:1px;top:1px" width="9" height="9" viewBox="0 0 9 9"><path d="M1.2 4.2 L3.4 7.4 L7.8 .8" stroke="#4b6097" stroke-width="1.7" fill="none"/></svg></div>
<div class="t" style="left:597px;top:455px;"><span class="kn10">Y</span><span class="kn3">e</span><span class="kn5">a</span><span class="k3">r</span></div>
<div class="chk" style="left:581px;top:486px"><i></i><svg class="a" style="left:1px;top:1px" width="9" height="9" viewBox="0 0 9 9"><path d="M1.2 4.2 L3.4 7.4 L7.8 .8" stroke="#4b6097" stroke-width="1.7" fill="none"/></svg></div>
<div class="t" style="left:597px;top:485px;"><span class="kn5">D</span><span class="kn8">a</span><span class="kn3">y</span></div>
<div class="chk" style="left:581px;top:516px"><i></i><svg class="a" style="left:1px;top:1px" width="9" height="9" viewBox="0 0 9 9"><path d="M1.2 4.2 L3.4 7.4 L7.8 .8" stroke="#4b6097" stroke-width="1.7" fill="none"/></svg></div>
<div class="t" style="left:597px;top:515px;">H<span class="k10">o</span><span class="k4">u</span><span class="k2">r</span><span class="k15">/</span><span class="k9">M</span><span class="k4">i</span><span class="k7">n</span><span class="k4">u</span><span class="k13">t</span><span class="kn4">e</span><span class="kn5">s</span></div>
<div class="chk" style="left:581px;top:546px"><i></i><svg class="a" style="left:1px;top:1px" width="9" height="9" viewBox="0 0 9 9"><path d="M1.2 4.2 L3.4 7.4 L7.8 .8" stroke="#4b6097" stroke-width="1.7" fill="none"/></svg></div>
<div class="t" style="left:597px;top:545px;"><span class="kn12">S</span><span class="kn5">e</span><span class="kn3">c</span><span class="k9">o</span><span class="k6">n</span><span class="k5">d</span><span class="kn6">s</span></div>
<div class="chk" style="left:581px;top:576px"><i></i></div>
<div class="t" style="left:597px;top:575px;"><span class="k7">M</span><span class="k3">i</span><span class="k4">d</span><span class="k6">n</span><span class="k3">i</span><span class="k6">g</span><span class="k3">h</span><span class="k12">t</span><span class="kn1"> </span><span class="k3">i</span><span class="kn6">s</span><span class="kn1"> </span><span class="kn4">2400</span></div>
<div class="grp" style="left:747px;top:424px;width:235px;height:56px"></div>
<div class="a" style="left:760px;top:420px;width:108px;height:16px;background:#f0f0f0"></div>
<div class="chk" style="left:763px;top:422px"><i></i><svg class="a" style="left:1px;top:1px" width="9" height="9" viewBox="0 0 9 9"><path d="M1.2 4.2 L3.4 7.4 L7.8 .8" stroke="#4b6097" stroke-width="1.7" fill="none"/></svg></div>
<div class="t" style="left:779px;top:422px;"><span class="k1">I</span><span class="k7">n</span><span class="kn2">c</span><span class="k5">l</span><span class="k4">u</span><span class="k6">d</span><span class="kn4">e</span><span class="k1"> </span>A<span class="k2">rr</span><span class="kn6">a</span><span class="kn1">y</span><span class="k1"> I</span><span class="kn3">D</span></div>
<div class="t" style="left:771px;top:448px;"><span class="k1">A</span><span class="k3">rr</span><span class="kn5">a</span>y<span class="k2"> I</span><span class="kn2">D</span><span class="kn7">:</span></div>
<div class="edit" style="left:837px;top:445px;width:49px;height:23px;border-color:#abadb3 #dbdfe6 #e3e9ef #e2e3ea"></div>
<div class="t" style="left:840px;top:449px;"><span class="kn5">101</span></div>
<div class="grp" style="left:747px;top:512px;width:235px;height:105px"></div>
<div class="leg" style="left:753px;top:506px"><span class="k8">M</span><span class="kn7">a</span><span class="kn5">x</span> <span class="kn7">a</span><span class="k7">n</span><span class="k5">d</span> <span class="k8">M</span><span class="k4">i</span><span class="k7">n</span> <span class="kn10">T</span><span class="k4">i</span><span class="k2">m</span><span class="kn4">e</span><span class="kn5">s</span><span class="k13">t</span><span class="kn7">a</span><span class="k2">m</span><span class="k8">p</span> O<span class="k8">p</span><span class="k13">t</span><span class="k4">i</span><span class="k10">o</span><span class="k7">n</span><span class="kn5">s</span></div>
<div class="rad" style="left:771px;top:532px"></div>
<div class="t" style="left:787px;top:531px;"><span class="kn9">T</span><span class="k2">O</span><span class="k1">A</span><span class="kn2">5</span><span class="k2"> </span><span class="kn10">F</span><span class="k12">o</span><span class="k3">r</span><span class="k4">m</span><span class="kn5">a</span><span class="k14">t</span></div>
<div class="rad on" style="left:771px;top:556px"></div>
<div class="t" style="left:787px;top:555px;"><span class="kn1">A</span><span class="k2">rr</span><span class="kn7">a</span><span class="kn1">y</span><span class="k1"> </span><span class="kn3">D</span><span class="kn7">a</span><span class="k13">t</span><span class="kn7">a</span><span class="k5">l</span><span class="k10">o</span><span class="k7">gg</span><span class="kn4">e</span><span class="k2">r</span><span class="k1"> </span><span class="kn12">F</span><span class="k10">o</span><span class="k2">rm</span><span class="kn7">a</span><span class="k13">t</span></div>
<div class="combo" style="left:787px;top:577px;width:177px;height:23px;background:linear-gradient(#f2f2f2 0,#ebebeb 48%,#dddddd 52%,#cfcfcf 100%);box-shadow:inset 0 0 0 1px #fcfcfc"><div class="cbb" style="background:none"></div></div>
<div class="t" style="left:791px;top:582px;"><span class="kn1">H</span><span class="k9">o</span><span class="k3">u</span><span class="k1">r</span><span class="k14">/</span><span class="k8">M</span><span class="k3">i</span><span class="k6">n</span><span class="k3">u</span><span class="k12">t</span><span class="kn5">e</span><span class="kn6">s</span> <span class="kn7">a</span><span class="k6">n</span><span class="k5">d</span> <span class="kn12">S</span><span class="kn5">e</span><span class="kn3">c</span><span class="k9">o</span><span class="k6">n</span><span class="k5">d</span><span class="kn6">s</span></div>
<div class="a" style="left:533px;top:642px;width:481px;height:1px;background:#fcfcfc"></div><div class="a" style="left:531px;top:392px;width:1px;height:297px;background:#10151c"></div><div class="a" style="left:533px;top:687px;width:481px;height:1px;background:#a8a8a8"></div><div class="a" style="left:532px;top:688px;width:484px;height:1px;background:#4cc4f2"></div>
<div class="btn" style="left:728px;top:653px;width:73px;height:23px;line-height:21px"><span class="kn2">O</span><span class="kn11">K</span></div>
<div class="btn" style="left:818px;top:653px;width:73px;height:23px;line-height:21px"><span class="kn12">C</span><span class="kn9">a</span><span class="k4">n</span><span class="kn5">c</span><span class="kn7">e</span><span class="k2">l</span></div>
<div class="btn" style="left:909px;top:653px;width:73px;height:23px;line-height:21px"><span class="kn2">H</span><span class="kn6">e</span><span class="k3">l</span><span class="k6">p</span></div>
</body>
</html>
